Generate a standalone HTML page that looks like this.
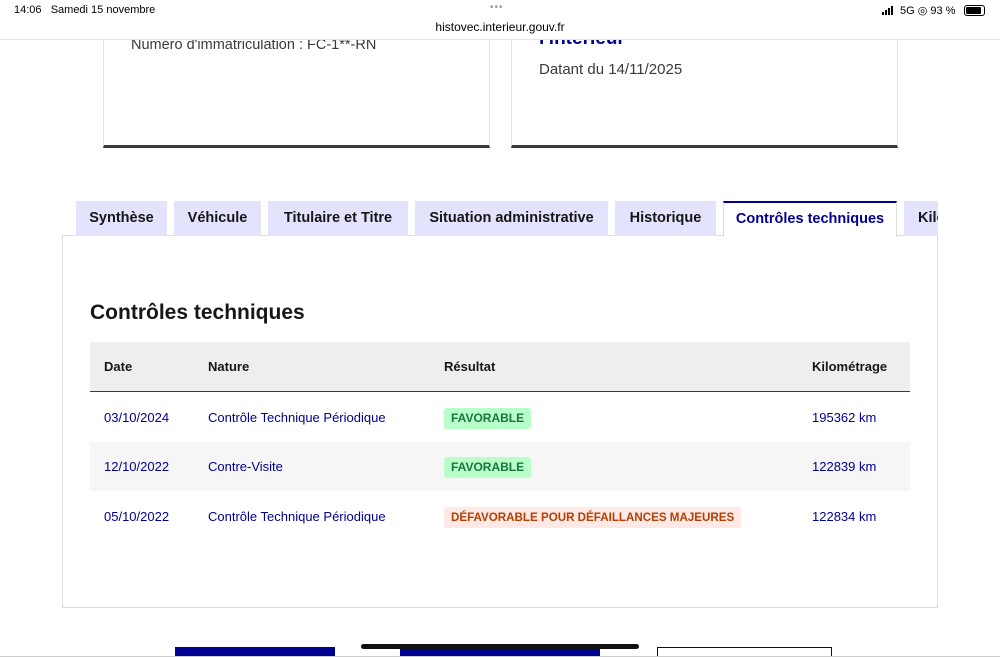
<!DOCTYPE html>
<html><head><meta charset="utf-8"><style>
*{margin:0;padding:0;box-sizing:border-box}
body{width:1000px;height:657px;overflow:hidden;background:#fff;font-family:"Liberation Sans",sans-serif;position:relative;color:#161616}
.abs{position:absolute}
.sb{left:0;top:0;width:1000px;height:40px;background:#fff;border-bottom:1px solid #e5e5e5;z-index:5}
.card{background:#fff;border:1px solid #e3e3e3;border-bottom:3px solid #3a3a3a}
.tab{top:201px;height:35px;background:#e3e3fd;font-weight:bold;font-size:14.5px;line-height:34px;text-align:center;color:#161616}
.tab.act{background:#fff;border-top:2px solid #000091;color:#000091;border-left:1px solid #ddd;border-right:1px solid #ddd;height:36px;line-height:32px;z-index:2}
.panel{left:62px;top:235px;width:876px;height:373px;border:1px solid #ddd}
.row{left:90px;width:820px;font-size:13px;color:#000091}
.row span{position:absolute;top:0}
.badge{font-weight:bold;font-size:12px;padding:0 7px;height:21px;line-height:21px;border-radius:3px;top:-2px!important}
.fav{background:#b8fec9;color:#18753c}
.def{background:#ffe9e6;color:#b34000}
</style></head><body>
<div class="abs sb">
<div class="abs" style="left:14px;top:4px;font-size:11px;color:#000">14:06&nbsp;&nbsp;&nbsp;Samedi 15 novembre</div>
<div class="abs" style="left:490px;top:2px;font-size:10px;color:#999;letter-spacing:1px">•••</div>
<div class="abs" style="left:0;width:1000px;top:20px;text-align:center;font-size:12px;color:#000">histovec.interieur.gouv.fr</div>
<div class="abs" style="left:882px;top:6px;width:14px;height:9px">
<div class="abs" style="left:0;top:6px;width:2px;height:3px;background:#000"></div><div class="abs" style="left:3px;top:4px;width:2px;height:5px;background:#000"></div><div class="abs" style="left:6px;top:2px;width:2px;height:7px;background:#000"></div><div class="abs" style="left:9px;top:0;width:2px;height:9px;background:#000"></div></div>
<div class="abs" style="left:900px;top:4px;font-size:11px;color:#000">5G ◎ 93 %</div>
<div class="abs" style="left:964px;top:5px;width:21px;height:11px;border:1px solid #000;border-radius:3px;padding:1px"><div style="width:90%;height:100%;background:#000;border-radius:1px"></div></div>
</div>
<div class="abs card" style="left:103px;top:-10px;width:387px;height:158px"></div>
<div class="abs" style="left:131px;top:37px;font-size:14.5px;color:#3a3a3a">Numéro d'immatriculation : FC-1**-RN</div>
<div class="abs card" style="left:511px;top:-10px;width:387px;height:158px"></div>
<div class="abs" style="left:539px;top:28px;font-size:19px;font-weight:bold;color:#000091;z-index:1">l'intérieur</div>
<div class="abs" style="left:539px;top:61px;font-size:15px;color:#3a3a3a">Datant du 14/11/2025</div>

<div class="abs panel"></div>
<div class="abs tab" style="left:76px;width:91px">Synthèse</div>
<div class="abs tab" style="left:174px;width:87px">Véhicule</div>
<div class="abs tab" style="left:268px;width:140px">Titulaire et Titre</div>
<div class="abs tab" style="left:415px;width:193px">Situation administrative</div>
<div class="abs tab" style="left:615px;width:101px">Historique</div>
<div class="abs tab act" style="left:723px;width:174px">Contrôles techniques</div>
<div class="abs tab" style="left:904px;width:34px;overflow:hidden;text-align:left;padding-left:14px">Kilométrage</div>

<div class="abs" style="left:90px;top:301px;font-size:21px;font-weight:bold">Contrôles techniques</div>
<div class="abs" style="left:90px;top:342px;width:820px;height:50px;background:#eee;border-bottom:1px solid #3a3a3a;font-size:13px;font-weight:bold">
<span class="abs" style="left:14px;top:17px">Date</span><span class="abs" style="left:118px;top:17px">Nature</span><span class="abs" style="left:354px;top:17px">Résultat</span><span class="abs" style="left:722px;top:17px">Kilométrage</span></div>
<div class="abs" style="left:90px;top:442px;width:820px;height:49px;background:#f6f6f6"></div>
<div class="abs row" style="top:410px"><span style="left:14px">03/10/2024</span><span style="left:118px">Contrôle Technique Périodique</span><span class="badge fav" style="left:354px">FAVORABLE</span><span style="left:722px">195362 km</span></div>
<div class="abs row" style="top:459px"><span style="left:14px">12/10/2022</span><span style="left:118px">Contre-Visite</span><span class="badge fav" style="left:354px">FAVORABLE</span><span style="left:722px">122839 km</span></div>
<div class="abs row" style="top:509px"><span style="left:14px">05/10/2022</span><span style="left:118px">Contrôle Technique Périodique</span><span class="badge def" style="left:354px;font-size:11.6px">DÉFAVORABLE POUR DÉFAILLANCES MAJEURES</span><span style="left:722px">122834 km</span></div>

<div class="abs" style="left:175px;top:647px;width:160px;height:10px;background:#000091"></div>
<div class="abs" style="left:400px;top:647px;width:200px;height:10px;background:#000091"></div>
<div class="abs" style="left:657px;top:647px;width:175px;height:10px;border:1px solid #000091;border-bottom:none"></div>
<div class="abs" style="left:361px;top:644px;width:278px;height:5px;background:#111;border-radius:3px"></div>
<div class="abs" style="left:0;top:656px;width:1000px;height:1px;background:#ccc"></div>
</body></html>
